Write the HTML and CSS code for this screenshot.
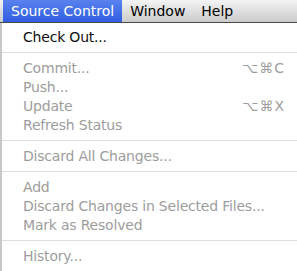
FILE: index.html
```html
<!DOCTYPE html>
<html lang="en">
<head>
    <meta charset="UTF-8">
    <title>Source Control Menu</title>
    <link rel="stylesheet" href="styles.css">
</head>
<body>
    <nav class="menubar">
        <span class="menubar-item active">Source Control</span>
        <span class="menubar-item">Window</span>
        <span class="menubar-item">Help</span>
    </nav>

    <ul class="menu">
        <li class="menu-item">Check Out...</li>
        <li class="separator"></li>
        <li class="menu-item disabled">Commit... <span class="shortcut">&#x2325;&#x2318;C</span></li>
        <li class="menu-item disabled">Push...</li>
        <li class="menu-item disabled">Update <span class="shortcut">&#x2325;&#x2318;X</span></li>
        <li class="menu-item disabled">Refresh Status</li>
        <li class="separator"></li>
        <li class="menu-item disabled">Discard All Changes...</li>
        <li class="separator"></li>
        <li class="menu-item disabled">Add</li>
        <li class="menu-item disabled">Discard Changes in Selected Files...</li>
        <li class="menu-item disabled">Mark as Resolved</li>
        <li class="separator"></li>
        <li class="menu-item disabled">History...</li>
    </ul>
</body>
</html>
```

FILE: styles.css
```css
body {
    margin: 0;
    font-family: 'DejaVu Sans', sans-serif;
    font-size: 14px;
    background-color: #ffffff;
    width: 297px;
    height: 271px;
    overflow: hidden;
}

.menubar {
    display: flex;
    height: 22px;
    background: linear-gradient(#f4f4f4, #cbcbcb);
    border-bottom: 1px solid #4a4a4a;
    padding-left: 3px;
}

.menubar-item {
    padding: 0 8px;
    line-height: 22px;
    color: #000000;
}

.active {
    background: linear-gradient(#5a82ee, #2f5ee0);
    color: #ffffff;
}

.menu {
    list-style: none;
    margin: 0;
    padding: 5px 0 0 0;
    border-left: 2px solid #c8c8c8;
    box-sizing: border-box;
    height: 248px;
}

.menu-item {
    display: flex;
    justify-content: space-between;
    padding: 0 12px 0 21px;
    line-height: 19px;
    letter-spacing: -0.2px;
    color: #111111;
}

.disabled {
    color: #9d9d9d;
}

.shortcut {
    letter-spacing: 1px;
}

.separator {
    height: 1px;
    background-color: #dedede;
    margin: 5px 0 6px 0;
}
```
